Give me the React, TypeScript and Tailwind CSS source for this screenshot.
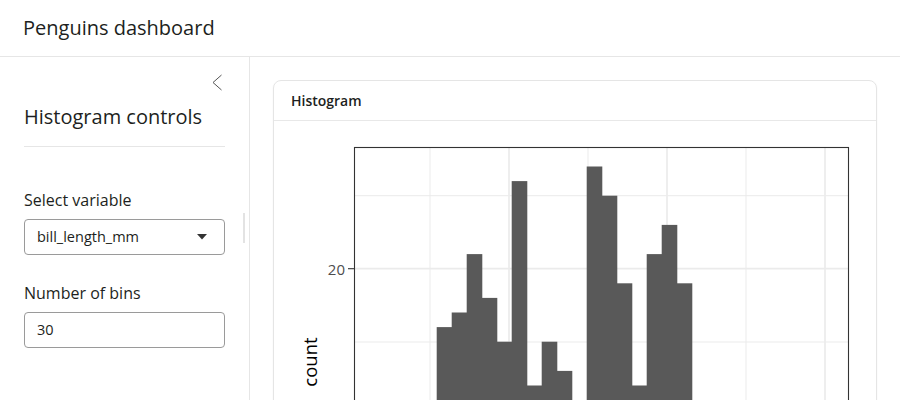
import React from "react";

// histogram counts, bins from left to right (px positions measured off the plot)
const counts = [1, 1, 3, 6, 9, 16, 17, 21, 18, 15, 26, 12, 15, 13, 9, 27, 25, 19, 12, 21, 23, 19, 7, 10, 5, 4, 2, 2, 1];
const firstBinX = 436.7 - 5 * 15 - 274;
const binW = 15;
const zeroY = 560.7 - 121;
const perCount = 14.6;

function Histogram() {
  return (
    <svg width={600} height={320} className="block">
      {/* minor grid */}
      {[156, 314, 472].map((x) => (
        <line key={"vm" + x} x1={x} y1={26} x2={x} y2={320} stroke="#ebebeb" strokeWidth={1} />
      ))}
      {[74.7, 221].map((y) => (
        <line key={"hm" + y} x1={80} y1={y} x2={574} y2={y} stroke="#ebebeb" strokeWidth={1} />
      ))}
      {/* major grid */}
      {[235, 393, 551].map((x) => (
        <line key={"vM" + x} x1={x} y1={26} x2={x} y2={320} stroke="#ebebeb" strokeWidth={1.7} />
      ))}
      <line x1={80} y1={147.7} x2={574} y2={147.7} stroke="#ebebeb" strokeWidth={1.7} />

      {counts.map((c, i) => {
        const top = zeroY - c * perCount;
        return (
          <rect
            key={i}
            x={firstBinX + i * binW}
            y={top}
            width={binW + 0.6}
            height={Math.max(0, 320 - top)}
            fill="#595959"
          />
        );
      })}

      {/* panel border */}
      <rect x={80.5} y={26.5} width={494} height={320} fill="none" stroke="#333333" strokeWidth={1.1} />

      {/* y axis */}
      <line x1={74} y1={147.7} x2={80} y2={147.7} stroke="#333333" strokeWidth={1.1} />
      <text x={71} y={153.5} textAnchor="end" fontSize={15} fill="#4d4d4d" fontFamily="'Open Sans', sans-serif">
        20
      </text>
      <text
        x={0}
        y={0}
        transform="translate(43 241) rotate(-90)"
        textAnchor="middle"
        fontSize={18.5}
        fill="#000000"
        fontFamily="'Open Sans', sans-serif"
      >
        count
      </text>
    </svg>
  );
}

export default function App() {
  return (
    <div className="w-[900px] h-[400px] overflow-hidden bg-white text-[#1d1f21] font-['Open_Sans',sans-serif] flex flex-col">
      {/* Navbar */}
      <div className="h-[57px] shrink-0 border-b border-[#e6e6e6] flex items-center px-[23px]">
        <span className="text-[20px] leading-6">Penguins dashboard</span>
      </div>

      <div className="flex flex-1 min-h-0">
        {/* Sidebar */}
        <div className="relative w-[250px] shrink-0 border-r border-[#e6e6e6] px-6 pt-[48px]">
          <button className="absolute top-[16px] left-[210px] w-[14px] h-[18px] flex items-center justify-center">
            <svg width="12" height="17" viewBox="0 0 12 17">
              <polyline points="10.5,1 2,8.5 10.5,16" fill="none" stroke="#555555" strokeWidth="1" />
            </svg>
          </button>
          <div className="absolute left-[243px] top-[156px] w-[2px] h-[30px] bg-[#e3e3e3]" />

          <h2 className="text-[20px] leading-6 pb-[17px] border-b border-[#e6e6e6]">Histogram controls</h2>

          <label className="block mt-[41px] text-[16px] leading-6">Select variable</label>
          <div className="mt-[7px] h-[36px] border border-[#9a9a9a] rounded-[4px] flex items-center justify-between pl-3 pr-[17px]">
            <span className="text-[14.5px]">bill_length_mm</span>
            <svg width="10" height="6" viewBox="0 0 10 6">
              <polygon points="0,0 10,0 5,5.5" fill="#333333" />
            </svg>
          </div>

          <label className="block mt-[26px] text-[16px] leading-6">Number of bins</label>
          <div className="mt-[7px] h-[36px] border border-[#9a9a9a] rounded-[4px] flex items-center pl-3">
            <span className="text-[14.5px]">30</span>
          </div>
        </div>

        {/* Main */}
        <div className="flex-1 px-[23px] pt-[23px]">
          <div className="border border-[#e5e5e5] rounded-[8px] shadow-[0_1px_2px_rgba(0,0,0,0.05)] flex flex-col overflow-hidden">
            <div className="h-[40px] shrink-0 border-b border-[#e8e8e8] flex items-center px-[17px]">
              <span className="text-[14px] font-semibold">Histogram</span>
            </div>
            <Histogram />
          </div>
        </div>
      </div>
    </div>
  );
}
